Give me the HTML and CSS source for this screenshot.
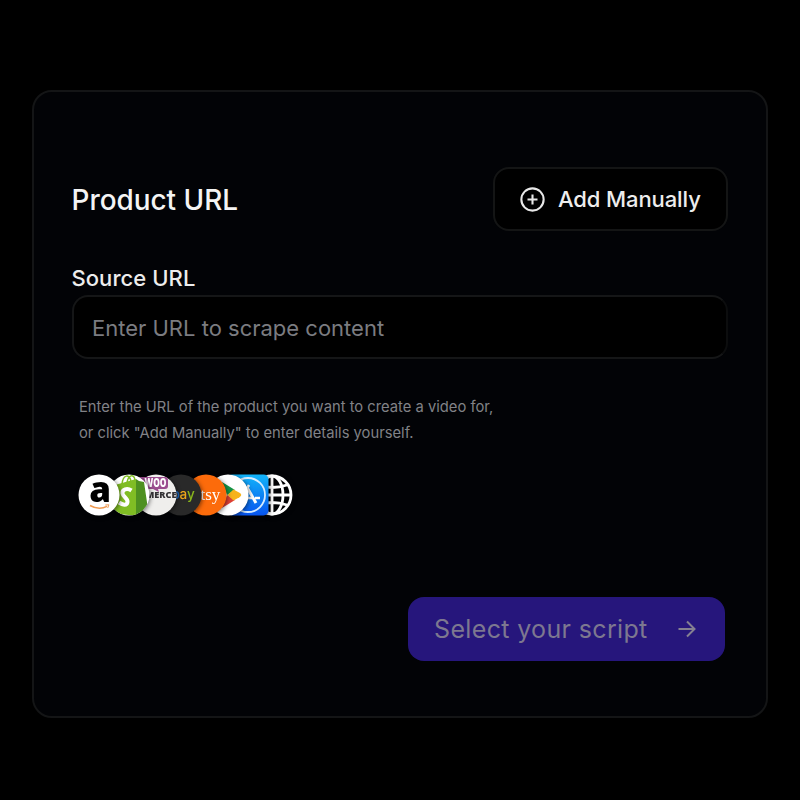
FILE: index.html
```
<!DOCTYPE html>
<html lang="en">
<head>
<meta charset="utf-8">
<title>Product URL</title>
<link rel="stylesheet" href="styles.css">
</head>
<body>
<main class="card">
  <header class="head">
    <h1 class="title"><span>Product URL</span></h1>
    <button class="manual" type="button">
      <svg class="plus" viewBox="0 0 24 24"><circle cx="12" cy="12" r="10.7"/><path d="M12 7.2v9.6M7.2 12h9.6"/></svg>
      <span>Add Manually</span>
    </button>
  </header>
  <label class="label" for="url"><span>Source URL</span></label>
  <div class="field" id="url"><span>Enter URL to scrape content</span></div>
  <p class="hint"><span>Enter the URL of the product you want to create a video for,</span><br><span class="second">or click "Add Manually" to enter details yourself.</span></p>
  <div class="stores">
    <svg class="store amazon" viewBox="0 0 42 42">
      <circle cx="21" cy="21" r="20.5" fill="#fff"/>
      <text x="11.2" y="28" class="amazon-a">a</text>
      <path d="M12 31.500Q21 36.500 29 32.300" fill="none" stroke="#f09a50" stroke-width="1.500"/>
      <path d="M27.300 31l3.600-.2-1.200 3.200" fill="none" stroke="#f09a50" stroke-width="1"/>
    </svg>
    <svg class="store shopify" viewBox="0 0 42 42">
      <clipPath id="disc"><circle cx="21" cy="21" r="20.500"/></clipPath>
      <circle cx="21" cy="21" r="20.500" fill="#fff"/>
      <g clip-path="url(#disc)">
        <path d="M7 11L28 5l1 37L3 39z" fill="#80bd24"/>
        <path d="M28 5l3 2 5 1 5 34H28z" fill="#4e9020"/>
        <path d="M14 10C15 1 21-1 23 7M19 9C20 1 26-1 27 6" fill="none" stroke="#80bd24" stroke-width="1.500"/>
        <path d="M23.500 16.500C19 13.500 14 15.500 14.500 19.500c.5 3.500 5.500 4.500 5 8.500-.5 4-5 3-8.500 .5" fill="none" stroke="#fff" stroke-width="4"/>
      </g>
    </svg>
    <svg class="store woo" viewBox="0 0 42 42">
      <circle cx="21" cy="21" r="20.500" fill="#efeeec"/>
      <path d="M4 3h26q3 0 3 3v6q0 3-3 3h-7l1 3-6-3H4z" fill="#9b4d8f"/>
      <text x="9.500" y="13" class="woo-name" textLength="22" lengthAdjust="spacingAndGlyphs">WOO</text>
      <text x="10.500" y="24.200" class="commerce" textLength="31" lengthAdjust="spacingAndGlyphs">MERCE</text>
    </svg>
    <svg class="store ebay" viewBox="0 0 42 42">
      <circle cx="21" cy="21" r="20.500" fill="#292929"/>
      <text x="11.500" y="25" class="ebay-name"><tspan fill="#1769c7">b</tspan><tspan x="19.500" fill="#eda51b">a</tspan><tspan fill="#89b51c">y</tspan></text>
    </svg>
    <svg class="store etsy" viewBox="0 0 42 42">
      <circle cx="21" cy="21" r="20.500" fill="#fc6b0b"/>
      <text x="15.500" y="26" class="etsy-name">tsy</text>
    </svg>
    <svg class="store play" viewBox="0 0 42 42">
      <circle cx="21" cy="21" r="20.500" fill="#fff"/>
      <path d="M15 8l13 8-8 5z" fill="#149447"/>
      <path d="M15 34l13-8-8-5z" fill="#df4137"/>
      <path d="M26.500 15.500l6 3.300q3.500 2.200 0 4.400l-6 3.300-6-5.500z" fill="#f6b31b"/>
    </svg>
    <svg class="store appstore" viewBox="0 0 42 42">
      <defs><linearGradient id="blue" x2="0" y2="1"><stop stop-color="#12b5fa"/><stop offset="1" stop-color="#0754ef"/></linearGradient></defs>
      <rect x=".5" y=".5" width="41" height="41" rx="5" fill="url(#blue)"/>
      <circle cx="21" cy="21" r="17" fill="none" stroke="#d5ecff" stroke-width="1.800"/>
      <path d="M19.500 12.500l9.500 16.500" fill="none" stroke="#fff" stroke-width="3"/>
      <path d="M22 11L11 29M13 24h12M28 24h5" fill="none" stroke="#fff" stroke-width="2.600"/>
    </svg>
    <svg class="store globe" viewBox="0 0 42 42">
      <circle cx="21" cy="21" r="19"/><ellipse cx="21" cy="21" rx="11" ry="19"/><path d="M21 2v38M2 21h38M6 11q15 5 30 0M6 31q15-5 30 0"/>
    </svg>
  </div>
  <button class="submit" type="button">
    <span>Select your script</span>
    <svg class="arrow" viewBox="0 0 18 18"><path d="M.5 9h16M9 1.500L16.500 9 9 16.500"/></svg>
  </button>
</main>
</body>
</html>
```
FILE: styles.css
```
* { box-sizing: border-box; }
body { margin: 0; background: #000; font-family: Inter, sans-serif; height: 800px; padding: 89.500px 32px 0; overflow: hidden; }
button { font: inherit; margin: 0; }
svg { display: block; flex: none; }
.card { width: 736px; height: 628px; border: 2px solid #141516; border-radius: 20px; background: #020306; padding: 75.500px 38px 0 37.500px; display: flex; flex-direction: column; }
.head { display: flex; justify-content: space-between; align-items: center; height: 64px; }
.title { margin: 2px 0 0; font-size: 27.900px; font-weight: 500; color: #f4f4f4; line-height: 34px; }
.manual { width: 235px; height: 64px; border: 2px solid #141515; border-radius: 16px; background: #000; color: #ededed; display: flex; align-items: center; padding: 0 0 0 25px; font-size: 22px; letter-spacing: -.1px; font-weight: 500; white-space: nowrap; }
.plus { width: 25px; height: 25px; margin-right: 13px; fill: none; stroke: #e8e8e8; stroke-width: 2; }
.label { color: #ededed; font-size: 22px; font-weight: 500; letter-spacing: .06px; line-height: 28px; height: 28px; margin-top: 33px; }
.field { height: 64px; margin-top: 3px; border: 2px solid; border-color: #151617 #0c0d0e #151617 #151617; border-radius: 16px; background: #000; color: #7b7c80; font-size: 22px; line-height: 62px; padding-left: 18.500px; }
.hint { margin: 35px 0 0 7.500px; font-size: 14.750px; line-height: 26px; color: #818287; white-space: nowrap; }
.stores { display: flex; height: 42px; margin: 27.500px 0 0 6px; }
.store { width: 42px; height: 42px; position: relative; overflow: visible; filter: drop-shadow(1px 1px 2px rgba(0, 0, 0, .5)); }
.amazon { z-index: 8; }
.shopify { z-index: 7; margin-left: -12px; }
.woo { z-index: 6; margin-left: -15px; }
.ebay { z-index: 5; margin-left: -17px; }
.etsy { z-index: 4; margin-left: -17px; }
.play { z-index: 3; margin-left: -20px; }
.appstore { z-index: 2; margin-left: -22px; }
.globe { z-index: 1; margin-left: -18px; fill: none; stroke: #fff; stroke-width: 2.800; }
.amazon-a { font: 800 35px "Open Sans", sans-serif; }
.woo-name { font: 800 12px "Open Sans", sans-serif; fill: #fff; }
.commerce { font: 800 9.500px "Open Sans", sans-serif; fill: #343235; }
.ebay-name { font: 500 13.500px Inter, sans-serif; }
.etsy-name { font: 17px "Liberation Serif", serif; fill: #fff; }
.submit { align-self: flex-end; width: 317px; height: 64px; margin: 81.500px 3px 0 0; border: 0; border-radius: 16px; background: #26167c; color: #7d7890; display: flex; align-items: center; justify-content: space-between; padding: 0 29px 0 26px; font-size: 25px; letter-spacing: .35px; white-space: nowrap; }
.arrow { width: 18px; height: 18px; fill: none; stroke: #858091; stroke-width: 2; }
```
